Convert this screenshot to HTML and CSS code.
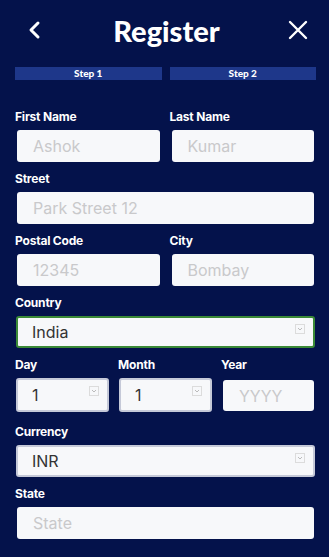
FILE: index.html
```html
<!DOCTYPE html>
<html lang="en">
<head>
    <meta charset="UTF-8">
    <meta name="viewport" content="width=device-width, initial-scale=1.0">
    <title>Register</title>
    <link rel="stylesheet" href="styles.css">
</head>
<body>
    <div class="screen">
        <div class="header">
            <button class="icon-btn" aria-label="Back">
                <svg width="16" height="20" viewBox="0 0 16 20"><path d="M11 3 L4 10 L11 17" fill="none" stroke="#fff" stroke-width="3" stroke-linecap="round" stroke-linejoin="round"/></svg>
            </button>
            <h1 class="title">Register</h1>
            <button class="icon-btn" aria-label="Close">
                <svg width="20" height="20" viewBox="0 0 20 20"><path d="M2 2 L18 18 M18 2 L2 18" fill="none" stroke="#fff" stroke-width="2.4" stroke-linecap="round"/></svg>
            </button>
        </div>

        <div class="steps">
            <div class="step">Step 1</div>
            <div class="step">Step 2</div>
        </div>

        <form class="form">
            <div class="row two">
                <div class="field">
                    <label>First Name</label>
                    <input type="text" placeholder="Ashok">
                </div>
                <div class="field">
                    <label>Last Name</label>
                    <input type="text" placeholder="Kumar">
                </div>
            </div>

            <div class="field">
                <label>Street</label>
                <input type="text" placeholder="Park Street 12">
            </div>

            <div class="row two">
                <div class="field">
                    <label>Postal Code</label>
                    <input type="text" placeholder="12345">
                </div>
                <div class="field">
                    <label>City</label>
                    <input type="text" placeholder="Bombay">
                </div>
            </div>

            <div class="field">
                <label>Country</label>
                <select class="active">
                    <option>India</option>
                </select>
            </div>

            <div class="row three">
                <div class="field">
                    <label>Day</label>
                    <select><option>1</option></select>
                </div>
                <div class="field">
                    <label>Month</label>
                    <select><option>1</option></select>
                </div>
                <div class="field">
                    <label>Year</label>
                    <input type="text" class="year" placeholder="YYYY">
                </div>
            </div>

            <div class="field">
                <label>Currency</label>
                <select><option>INR</option></select>
            </div>

            <div class="field">
                <label>State</label>
                <input type="text" placeholder="State">
            </div>
        </form>
    </div>
</body>
</html>
```

FILE: styles.css
```css
body {
    margin: 0;
    background: #04124b;
    font-family: Inter, 'Liberation Sans', sans-serif;
    color: white;
}
.screen {
    padding: 0 13px 0 15px;
}
.header {
    height: 62px;
    display: flex;
    align-items: center;
    justify-content: space-between;
    padding: 0 6px 2px 8px;
    box-sizing: border-box;
}
.icon-btn {
    background: none;
    border: none;
    padding: 0;
    width: 24px;
    height: 24px;
    display: flex;
    align-items: center;
    justify-content: center;
    cursor: pointer;
}
.title {
    margin: 0;
    font-family: Lato, 'Open Sans', sans-serif;
    font-weight: 900;
    font-size: 29px;
}
.steps {
    display: grid;
    grid-template-columns: repeat(2, minmax(0, 1fr));
    gap: 8px;
    margin-top: 5px;
}
.step {
    background: #1e378a;
    height: 13px;
    line-height: 13px;
    text-align: center;
    font-family: Lato, 'Open Sans', sans-serif;
    font-weight: 900;
    font-size: 10px;
}
.form {
    margin-top: 30px;
}
.row {
    display: grid;
    gap: 8px;
}
.row.two { grid-template-columns: repeat(2, minmax(0, 1fr)); }
.row.three {
    grid-template-columns: repeat(3, minmax(0, 1fr));
    margin-bottom: 3px;
}
.field {
    display: flex;
    flex-direction: column;
    margin-bottom: 10px;
    min-width: 0;
}
label {
    font-size: 12px;
    font-weight: 700;
    line-height: 14px;
    margin-bottom: 6px;
    letter-spacing: -0.2px;
}
input {
    box-sizing: border-box;
    min-width: 0;
    height: 32px;
    margin: 0 2px;
    border: none;
    border-radius: 3px;
    background: #f7f8fa;
    padding: 0 16px;
    font-family: Inter, 'Liberation Sans', sans-serif;
    font-size: 16px;
    color: #333;
}
input::placeholder {
    color: #c9c9cb;
}
select {
    box-sizing: border-box;
    min-width: 0;
    height: 32px;
    margin: 0 1px;
    appearance: none;
    -webkit-appearance: none;
    border: 2px solid #c5c9d8;
    border-radius: 3px;
    background-color: #f7f8fa;
    background-image: url("data:image/svg+xml,%3Csvg xmlns='http://www.w3.org/2000/svg' width='10' height='10'%3E%3Crect x='0.5' y='0.5' width='9' height='9' fill='none' stroke='%23dcdcdc'/%3E%3Cpath d='M3 4 L5 6 L7 4' fill='none' stroke='%23bbb'/%3E%3C/svg%3E");
    background-repeat: no-repeat;
    background-position: right 8px top 6px;
    padding: 0 14px;
    font-family: Inter, 'Liberation Sans', sans-serif;
    font-size: 16px;
    color: #333;
}
select.active {
    border-color: #3b8a37;
}
.row.three select {
    height: 34px;
}
.row.three .year {
    margin-top: 2px;
    height: 31px;
}
```
